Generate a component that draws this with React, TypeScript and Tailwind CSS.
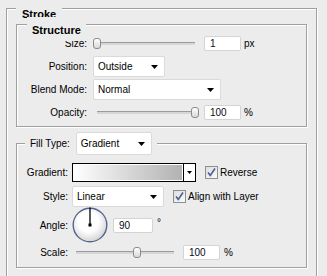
import { ReactNode } from "react";

const Slider = ({ pos }: { pos: number }) => {
    return <div className="relative w-[106px] h-[11px]">
        <div className="absolute left-[4px] right-[4px] top-[4px] h-[3px] bg-[#d6d6d6] border-t border-[#9c9c9c] border-b-white"></div>
        <div className="absolute top-0 w-[8px] h-[11px] rounded-[3px] border border-[#8c8c8c] bg-gradient-to-b from-white to-[#d8d8d8]" style={{ left: pos }}></div>
    </div>
}

const NumBox = ({ value, w }: { value: string; w: string }) => {
    return <div className={`${w} h-[15px] bg-white border border-[#d4d4d4] rounded-[2px] pl-[5px] text-[10px] leading-[13px] text-[#0a0a1a]`}>{value}</div>
}

const Select = ({ value, w, h = "h-[21px]" }: { value: string; w: string; h?: string }) => {
    return <div className={`${w} ${h} bg-white border border-[#dadada] rounded-[2px] flex items-center justify-between pl-[4px] pr-[6px]`}>
        <span className="text-[10px]">{value}</span>
        <svg width="7" height="4" viewBox="0 0 7 4"><path d="M0 0h7L3.5 4z" fill="#000" /></svg>
    </div>
}

const Check = ({ label }: { label: string }) => {
    return <div className="flex items-center">
        <svg width="13" height="13" viewBox="0 0 13 13">
            <defs>
                <linearGradient id="cb" x1="0" y1="0" x2="1" y2="1">
                    <stop offset="0" stopColor="#dcdcdc" />
                    <stop offset="1" stopColor="#fbfbfb" />
                </linearGradient>
            </defs>
            <rect x="0.5" y="0.5" width="12" height="12" fill="url(#cb)" stroke="#8e8f8f" />
            <path d="M3 6.5l2.3 3L10 2.5" fill="none" stroke="#4a5d94" strokeWidth="1.6" />
        </svg>
        <span className="ml-[2px] text-[10px]">{label}</span>
    </div>
}

const Group = ({ legend, left, className, children }: { legend: ReactNode; left: string; className: string; children: ReactNode }) => {
    return <div className={`relative border border-[#a0a0a0] shadow-[inset_1px_1px_0_#fff,1px_1px_0_#fff] ${className}`}>
        <div className={`absolute ${left} bg-[#ececec]`}>{legend}</div>
        {children}
    </div>
}

function Row({ label, lw, h, className = "", children }: { label: string; lw: string; h: string; className?: string; children: ReactNode }) {
    return <div className={`flex items-center ${h} ${className}`}>
        <div className={`${lw} text-right text-[10px]`}>{label}</div>
        {children}
    </div>
}

export default function App() {
    return <div className="w-[327px] h-[276px] overflow-hidden bg-[#ececec] pl-[6px] pt-[8px] text-black" style={{ fontFamily: '"Liberation Sans", Arial, sans-serif' }}>
        <Group className="w-[311px] h-[280px] pl-[9px] pt-[15px]" left="-top-[8px] left-[9px] px-[6px]" legend={<span className="text-[11px] font-bold leading-[14px]">Stroke</span>}>
            <Group className="w-[291px] h-[103px] pt-[7px]" left="-top-[8px] left-[10px] px-[5px]" legend={<span className="text-[11px] font-bold leading-[14px]">Structure</span>}>
                <Row label="Size:" lw="w-[70px]" h="h-[23px]">
                    <div className="ml-[6px]"><Slider pos={0} /></div>
                    <div className="ml-[5px]"><NumBox value="1" w="w-[37px]" /></div>
                    <span className="ml-[3px] text-[10px]">px</span>
                </Row>
                <Row label="Position:" lw="w-[70px]" h="h-[23px]">
                    <div className="ml-[6px]"><Select value="Outside" w="w-[72px]" /></div>
                </Row>
                <Row label="Blend Mode:" lw="w-[70px]" h="h-[23px]">
                    <div className="ml-[6px]"><Select value="Normal" w="w-[128px]" /></div>
                </Row>
                <Row label="Opacity:" lw="w-[70px]" h="h-[23px]">
                    <div className="ml-[6px]"><Slider pos={98} /></div>
                    <div className="ml-[5px]"><NumBox value="100" w="w-[37px]" /></div>
                    <span className="ml-[3px] text-[10px]">%</span>
                </Row>
            </Group>

            <Group className="mt-[16px] w-[291px] h-[125px] pt-[18px]" left="-top-[12px] left-[8px] px-[5px]" legend={
                <div className="flex items-center">
                    <span className="text-[10px]">Fill Type:</span>
                    <div className="ml-[6px]"><Select value="Gradient" w="w-[76px]" h="h-[23px]" /></div>
                </div>
            }>
                <Row label="Gradient:" lw="w-[51px]" h="h-[21px]">
                    <div className="ml-[4px] flex h-[19px] border border-black">
                        <div className="w-[110px] border border-white bg-gradient-to-r from-white to-[#b2b2b2]"></div>
                        <div className="w-[12px] bg-white border-l border-black flex items-center justify-center">
                            <svg width="5" height="3" viewBox="0 0 5 3"><path d="M0 0h5L2.5 3z" fill="#000" /></svg>
                        </div>
                    </div>
                    <div className="ml-[9px]"><Check label="Reverse" /></div>
                </Row>
                <Row label="Style:" lw="w-[51px]" h="h-[21px]" className="mt-[3px]">
                    <div className="ml-[4px]"><Select value="Linear" w="w-[92px]" /></div>
                    <div className="ml-[9px]"><Check label="Align with Layer" /></div>
                </Row>
                <Row label="Angle:" lw="w-[51px]" h="h-[36px]">
                    <svg className="ml-[4px]" width="36" height="36" viewBox="0 0 36 36">
                        <defs>
                            <radialGradient id="dial" cx="0.45" cy="0.4" r="0.6">
                                <stop offset="0.5" stopColor="#ffffff" />
                                <stop offset="1" stopColor="#d4d4d4" />
                            </radialGradient>
                        </defs>
                        <circle cx="18" cy="18" r="16.8" fill="url(#dial)" stroke="#54658f" strokeWidth="1.4" />
                        <line x1="18" y1="0.5" x2="18" y2="18" stroke="#000" strokeWidth="1.3" />
                        <rect x="16.5" y="16.5" width="3" height="3" fill="#000" />
                    </svg>
                    <div className="ml-[5px]"><NumBox value="90" w="w-[40px]" /></div>
                    <span className="ml-[4px] self-start mt-[11px] text-[10px] leading-[10px]">°</span>
                </Row>
                <Row label="Scale:" lw="w-[51px]" h="h-[15px]" className="mt-[2px]">
                    <div className="ml-[4px]"><Slider pos={61} /></div>
                    <div className="ml-[5px]"><NumBox value="100" w="w-[37px]" /></div>
                    <span className="ml-[4px] text-[10px]">%</span>
                </Row>
            </Group>
        </Group>
    </div>
}
